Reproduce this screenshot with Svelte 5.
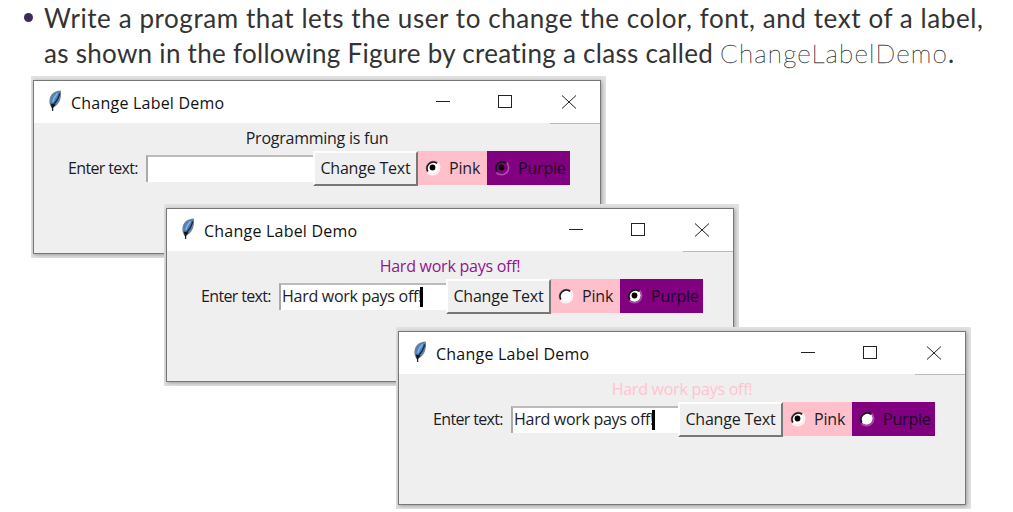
<script lang="ts">
	interface DemoWindow {
		x: number;
		y: number;
		label: string;
		color: string;
		entry: string;
		pink: 'on' | 'off';
		purple: 'on' | 'off' | 'tristate';
	}

	const windows: DemoWindow[] = [
		{ x: 31, y: 76, label: 'Programming is fun', color: '#1c1c26', entry: '', pink: 'on', purple: 'tristate' },
		{ x: 164, y: 204, label: 'Hard work pays off!', color: '#92148f', entry: 'Hard work pays off!', pink: 'off', purple: 'on' },
		{ x: 396, y: 327, label: 'Hard work pays off!', color: '#ffc4cf', entry: 'Hard work pays off!', pink: 'on', purple: 'off' }
	];
</script>

{#snippet radio(state: string, bg: string)}
	<svg class="radio" width="17" height="17" viewBox="0 0 17 17">
		<circle cx="8.5" cy="8.5" r="6.2" fill={state === 'tristate' ? bg : '#fff'} />
		<path d="M3.4 13.6A7.2 7.2 0 0 0 13.6 3.4" fill="none" stroke={bg === 'pink' ? '#fff4f5' : '#a850a8'} stroke-width="1.5" />
		<path d="M3.4 13A7 7 0 0 1 13.4 3.6" fill="none" stroke={bg === 'pink' ? '#957c80' : '#4d0050'} stroke-width="1.3" />
		<path d="M3.9 12.4A6.2 6.2 0 0 1 13 4.4" fill="none" stroke="#151515" stroke-width="1.5" />
		{#if state !== 'off'}
			<circle cx="8.5" cy="8.5" r="2.9" fill="#000" />
		{/if}
	</svg>
{/snippet}

<main class="slide">
	<div class="task">
		<span class="bullet"></span>
		<p>
			<span class="line first">Write a program that lets the user to change the color, font, and text of a label,</span>
			<span class="line second">as shown in the following Figure by creating a class called <code>ChangeLabelDemo</code>.</span>
		</p>
	</div>

	{#each windows as win}
		<section class="frame" style="left: {win.x}px; top: {win.y}px">
			<div class="window">
				<header>
					<svg class="feather" width="14" height="22" viewBox="0 0 14 22">
						<path d="M3.6 18C.2 13 .8 7 5 3C7.4 1.1 10 .3 12.8 .4C13.6 4.4 12.8 9.8 10.4 13.2C8.8 15.6 6.7 17 3.6 18Z" fill="#77808a" />
						<path d="M3.4 16C1.7 12 2.6 7.2 6 4.1C7.9 2.5 9.8 1.8 11.8 1.6C12.3 5.2 11.5 9.4 9.5 12.4C8 14.4 6.2 15.6 3.4 16Z" fill="#4b83c4" />
						<path d="M9.5 3.2C7.2 5.5 5.6 8.5 4.8 12" fill="none" stroke="#8fb6e0" stroke-width="1.4" />
						<path d="M11.6 3.4C11 8.5 8 12 4.6 15.5V21" fill="none" stroke="#1b2733" stroke-width="1.3" />
						<path d="M2.6 13.6L4.2 19L7.6 14.6Z" fill="#10151c" />
					</svg>
					<h2>Change Label Demo</h2>
					<svg class="controls" width="142" height="16" viewBox="0 0 142 16" fill="none" stroke="#222">
						<path d="M2 7.5H16" />
						<rect x="64.5" y="1.5" width="13" height="12" />
						<path d="M128 1.5L142 14.5M142 1.5L128 14.5" />
					</svg>
				</header>
				<div class="body">
					<div class="message" style="color: {win.color}">{win.label}</div>
					<div class="row">
						<span class="prompt">Enter text:</span>
						<span class="entry">{win.entry}{#if win.entry}<i class="caret"></i>{/if}</span>
						<button>Change Text</button>
						<span class="choice pink">{@render radio(win.pink, 'pink')}Pink</span>
						<span class="choice purple">{@render radio(win.purple, 'purple')}Purple</span>
					</div>
				</div>
			</div>
		</section>
	{/each}
</main>

<style>
	:global(body) {
		margin: 0;
		background: #fff;
	}

	.slide {
		position: relative;
		width: 1013px;
		height: 512px;
		overflow: hidden;
		background: #fff;
	}

	.task {
		display: flex;
		color: #333;
		font-family: Lato, sans-serif;
		font-size: 26px;
	}

	.bullet {
		width: 9px;
		height: 9px;
		margin: 13px 11px 0 24px;
		border-radius: 50%;
		background: #3e2a5c;
	}

	p {
		margin: 0;
	}

	.line {
		display: block;
		height: 35px;
		line-height: 36px;
		white-space: nowrap;
	}

	.first {
		letter-spacing: 0.58px;
	}

	.second {
		letter-spacing: 0.29px;
	}

	code {
		font-family: Lato, sans-serif;
		font-weight: 100;
		letter-spacing: 1.2px;
		-webkit-text-stroke: 0.35px #333;
	}

	.frame {
		position: absolute;
		box-sizing: border-box;
		width: 575px;
		height: 182px;
		padding: 4px 5px 4px 2px;
		background: #e2e2e2;
		overflow: hidden;
	}

	.window {
		box-sizing: border-box;
		height: 174px;
		border: 1px solid #777;
		background: #efefef;
		box-shadow: 1px 1px 4px #999;
		font-family: "Open Sans", sans-serif;
		font-size: 16px;
	}

	header {
		display: flex;
		align-items: center;
		height: 42px;
		padding-left: 14px;
		background: #fff;
	}

	.feather {
		margin-top: -2px;
	}

	h2 {
		width: 154px;
		margin: 1px 0 0 9px;
		color: #111;
		font-size: 16px;
		font-weight: 400;
		letter-spacing: 0.22px;
		white-space: nowrap;
	}

	.controls {
		margin-left: 209px;
	}

	.body {
		border-top: 1px solid #efefef;
		border-image: linear-gradient(90deg, #efefef 91%, #bbb 91%) 1;
	}

	.message {
		height: 27px;
		line-height: 28px;
		text-align: center;
		letter-spacing: -0.25px;
	}

	.row {
		display: flex;
		align-items: flex-start;
		padding-left: 34px;
		color: #1c1c26;
		letter-spacing: -0.2px;
		line-height: 34px;
		white-space: nowrap;
	}

	.prompt {
		width: 78px;
		letter-spacing: -0.65px;
	}

	.entry {
		box-sizing: border-box;
		width: 167px;
		height: 27px;
		margin-top: 4px;
		padding-left: 1px;
		border-top: 2px solid #bbb;
		border-left: 2px solid #aaa;
		background: #fff;
		letter-spacing: -0.28px;
		line-height: 23px;
	}

	.caret {
		display: inline-block;
		width: 3px;
		height: 20px;
		margin-left: -2px;
		background: #000;
		vertical-align: -5px;
	}

	button {
		box-sizing: border-box;
		width: 105px;
		height: 35px;
		padding: 0;
		border: 2px solid;
		border-color: #fff #777 #777 #fff;
		background: #efefef;
		color: #1c1c26;
		font: inherit;
		letter-spacing: inherit;
		line-height: 29px;
	}

	.choice {
		box-sizing: border-box;
		display: flex;
		height: 34px;
		padding-left: 6px;
	}

	.pink {
		width: 69px;
		background: #ffc0cb;
	}

	.purple {
		width: 83px;
		background: #800080;
		color: #1d001f;
	}

	.radio {
		margin: 8px 8px 0 0;
	}
</style>
